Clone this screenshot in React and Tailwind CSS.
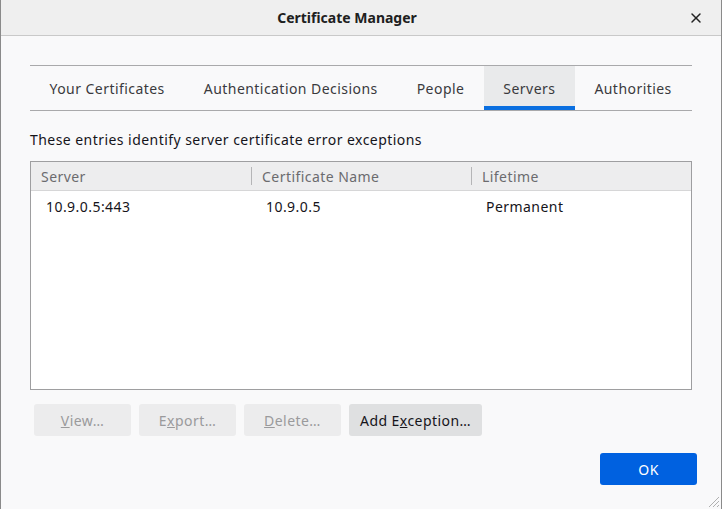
import { X } from "lucide-react";

const tabs = ["Your Certificates", "Authentication Decisions", "People", "Servers", "Authorities"];

function Btn({ children, disabled }) {
  return (
    <button
      className={
        disabled
          ? "h-[32px] w-[97px] rounded-[3px] bg-[#ececed] text-[#9a9a9c]"
          : "h-[32px] px-[11px] rounded-[3px] bg-[#dfe0e1] text-[#15141a]"
      }
    >
      {children}
    </button>
  );
}

export default function App() {
  return (
    <div
      className="w-[722px] h-[509px] bg-[#f9f9fa] border-l border-r border-[#8a8a8a] relative flex flex-col text-[14px] tracking-[0.45px] text-[#15141a]"
      style={{ fontFamily: '"Noto Sans", "Open Sans", sans-serif' }}
    >
      {/* TITLE BAR */}
      <div className="h-[36px] shrink-0 bg-[#efefef] border-b border-[#c9c9c9] flex items-center justify-center pr-[28px] relative">
        <span className="font-bold text-[14px] tracking-normal text-[#202020]">Certificate Manager</span>
        <X className="absolute right-[17px] top-[10px] w-[16px] h-[16px] text-[#222]" strokeWidth={2.2} />
      </div>

      <div className="px-[29px] pt-[29px] flex flex-col flex-1">
        {/* TABS */}
        <div className="flex border-t border-b border-[#a9a9ab] h-[46px] whitespace-nowrap">
          {tabs.map((t) => (
            <div
              key={t}
              className={
                t === "Servers"
                  ? "shrink-0 px-[19.5px] flex items-center bg-[#e9eaeb] border-b-[4px] border-[#0a6fe0] pt-[4px] text-[#3a3a3d]"
                  : "shrink-0 px-[19.5px] flex items-center text-[#3a3a3d]"
              }
            >
              {t}
            </div>
          ))}
        </div>

        <p className="mt-[19px] leading-[20px]">These entries identify server certificate error exceptions</p>

        {/* TABLE */}
        <div className="mt-[11px] h-[229px] border border-[#9e9ea0] bg-white">
          <div className="h-[29px] bg-[#ededee] border-b border-[#d6d6d7] grid grid-cols-[220px_220px_1fr] text-[#6b6b6e]">
            <div className="pl-[10px] flex items-center">Server</div>
            <div className="flex items-center">
              <span className="h-[18px] border-l border-[#b5b5b7] mr-[10px]" />
              Certificate Name
            </div>
            <div className="flex items-center">
              <span className="h-[18px] border-l border-[#b5b5b7] mr-[10px]" />
              Lifetime
            </div>
          </div>
          <div className="h-[30px] grid grid-cols-[220px_220px_1fr] items-center">
            <div className="pl-[15px]">10.9.0.5:443</div>
            <div className="pl-[15px]">10.9.0.5</div>
            <div className="pl-[15px]">Permanent</div>
          </div>
        </div>

        {/* BUTTONS */}
        <div className="mt-[14px] pl-[4px] flex gap-[8px]">
          <Btn disabled>
            <u>V</u>iew…
          </Btn>
          <Btn disabled>
            E<u>x</u>port…
          </Btn>
          <Btn disabled>
            <u>D</u>elete…
          </Btn>
          <Btn>
            Add E<u>x</u>ception…
          </Btn>
        </div>

        <div className="mt-[17px] flex justify-end">
          <button className="h-[32px] w-[97px] -mr-[5px] rounded-[3px] bg-[#0061e0] text-white">OK</button>
        </div>
      </div>

      {/* resize grip */}
      <svg className="absolute right-[1px] bottom-[1px]" width="14" height="14" viewBox="0 0 14 14">
        <path d="M13 3 L3 13 M13 7 L7 13 M13 11 L11 13" stroke="#b0b0b0" strokeWidth="1" />
      </svg>
    </div>
  );
}
